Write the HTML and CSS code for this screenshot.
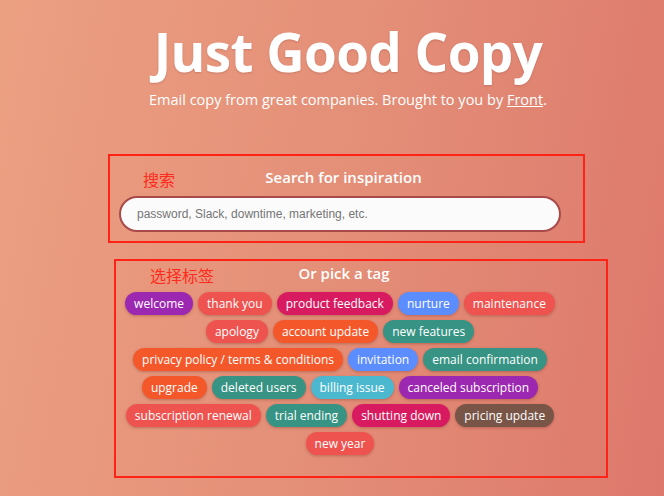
FILE: index.html
```html
<!DOCTYPE html>
<html lang="en">
<head>
    <meta charset="UTF-8">
    <meta name="viewport" content="width=device-width, initial-scale=1.0">
    <title>Just Good Copy</title>
    <link rel="stylesheet" href="styles.css">
</head>
<body>
    <header class="hero">
        <h1>Just Good Copy</h1>
        <p class="tagline">Email copy from great companies. Brought to you by <a href="#">Front</a>.</p>
    </header>

    <section class="search">
        <h2>Search for inspiration</h2>
        <input class="search-input" type="text" placeholder="password, Slack, downtime, marketing, etc.">
    </section>

    <section class="tags">
        <h2>Or pick a tag</h2>
        <div class="tag-list">
            <a class="tag purple" href="#">welcome</a>
            <a class="tag red" href="#">thank you</a>
            <a class="tag pink" href="#">product feedback</a>
            <a class="tag blue" href="#">nurture</a>
            <a class="tag red" href="#">maintenance</a>
            <a class="tag red" href="#">apology</a>
            <a class="tag orange" href="#">account update</a>
            <a class="tag teal" href="#">new features</a>
            <a class="tag orange" href="#">privacy policy / terms &amp; conditions</a>
            <a class="tag blue" href="#">invitation</a>
            <a class="tag teal" href="#">email confirmation</a>
            <a class="tag orange" href="#">upgrade</a>
            <a class="tag teal" href="#">deleted users</a>
            <a class="tag cyan" href="#">billing issue</a>
            <a class="tag purple" href="#">canceled subscription</a>
            <a class="tag red" href="#">subscription renewal</a>
            <a class="tag teal" href="#">trial ending</a>
            <a class="tag pink" href="#">shutting down</a>
            <a class="tag brown" href="#">pricing update</a>
            <a class="tag red" href="#">new year</a>
        </div>
    </section>

    <!-- annotations drawn on top of the screenshot -->
    <div class="note-box note-search"></div>
    <div class="note-label note-label-search">搜索</div>
    <div class="note-box note-tags"></div>
    <div class="note-label note-label-tags">选择标签</div>
</body>
</html>
```

FILE: styles.css
```css
html, body {
    height: 100%;
}

body {
    margin: 0;
    font-family: "Open Sans", "Noto Sans", sans-serif;
    color: #fff;
    background: linear-gradient(100deg, #eca082 0%, #e48f78 50%, #dd786c 100%);
    position: relative;
    overflow: hidden;
}

.hero {
    text-align: center;
    padding-top: 15px;
    padding-left: 32px;
}

.hero h1 {
    margin: 0;
    font-size: 53px;
    font-weight: 700;
    line-height: 74px;
    letter-spacing: -0.6px;
    text-shadow: 0 1px 2px rgba(120, 50, 40, 0.25);
}

.tagline {
    margin: 0;
    font-size: 14.5px;
    line-height: 22px;
}

    .tagline a {
        color: #fff;
    }

.search {
    margin-top: 55px;
    display: flex;
    flex-direction: column;
    align-items: center;
    padding-left: 16px;
}

h2 {
    margin: 0;
    font-size: 15px;
    font-weight: 600;
    line-height: 22px;
}

.search h2 {
    margin-left: 7px;
}

.search-input {
    box-sizing: border-box;
    width: 442px;
    height: 36px;
    margin-top: 8px;
    padding: 0 16px;
    border: 2px solid #a84a4a;
    border-radius: 18px;
    background: #fbfbfb;
    font-family: "Liberation Sans", Arial, sans-serif;
    font-size: 12px;
    outline: none;
}

    .search-input::placeholder {
        color: #757575;
    }

.tags {
    margin-top: 30px;
    display: flex;
    flex-direction: column;
    align-items: center;
    padding-left: 24px;
}

.tag-list {
    width: 446px;
    margin-top: 8px;
    margin-left: -8px;
    display: flex;
    flex-wrap: wrap;
    justify-content: center;
    gap: 5px 5px;
}

.tag {
    display: block;
    height: 23px;
    line-height: 23px;
    padding: 0 9px;
    border-radius: 12px;
    color: #fff;
    font-size: 12px;
    text-decoration: none;
    box-shadow: 0 1px 3px rgba(90, 30, 20, 0.3);
}

.purple { background: #9c27b0; }
.red { background: #ef5350; }
.pink { background: #d81b60; }
.blue { background: #5c8dff; }
.orange { background: #f4582a; }
.teal { background: #379383; }
.cyan { background: #4cb8d0; }
.brown { background: #795548; }

.note-box {
    position: absolute;
    border: 2px solid #ff2216;
    box-sizing: border-box;
}

.note-search {
    left: 108px;
    top: 154px;
    width: 477px;
    height: 89px;
}

.note-tags {
    left: 114px;
    top: 259px;
    width: 494px;
    height: 219px;
}

.note-label {
    position: absolute;
    color: #ff2a1c;
    font-family: "Noto Sans CJK SC", sans-serif;
    font-size: 16px;
    line-height: 20px;
}

.note-label-search {
    left: 143px;
    top: 169px;
}

.note-label-tags {
    left: 150px;
    top: 265px;
}
```
